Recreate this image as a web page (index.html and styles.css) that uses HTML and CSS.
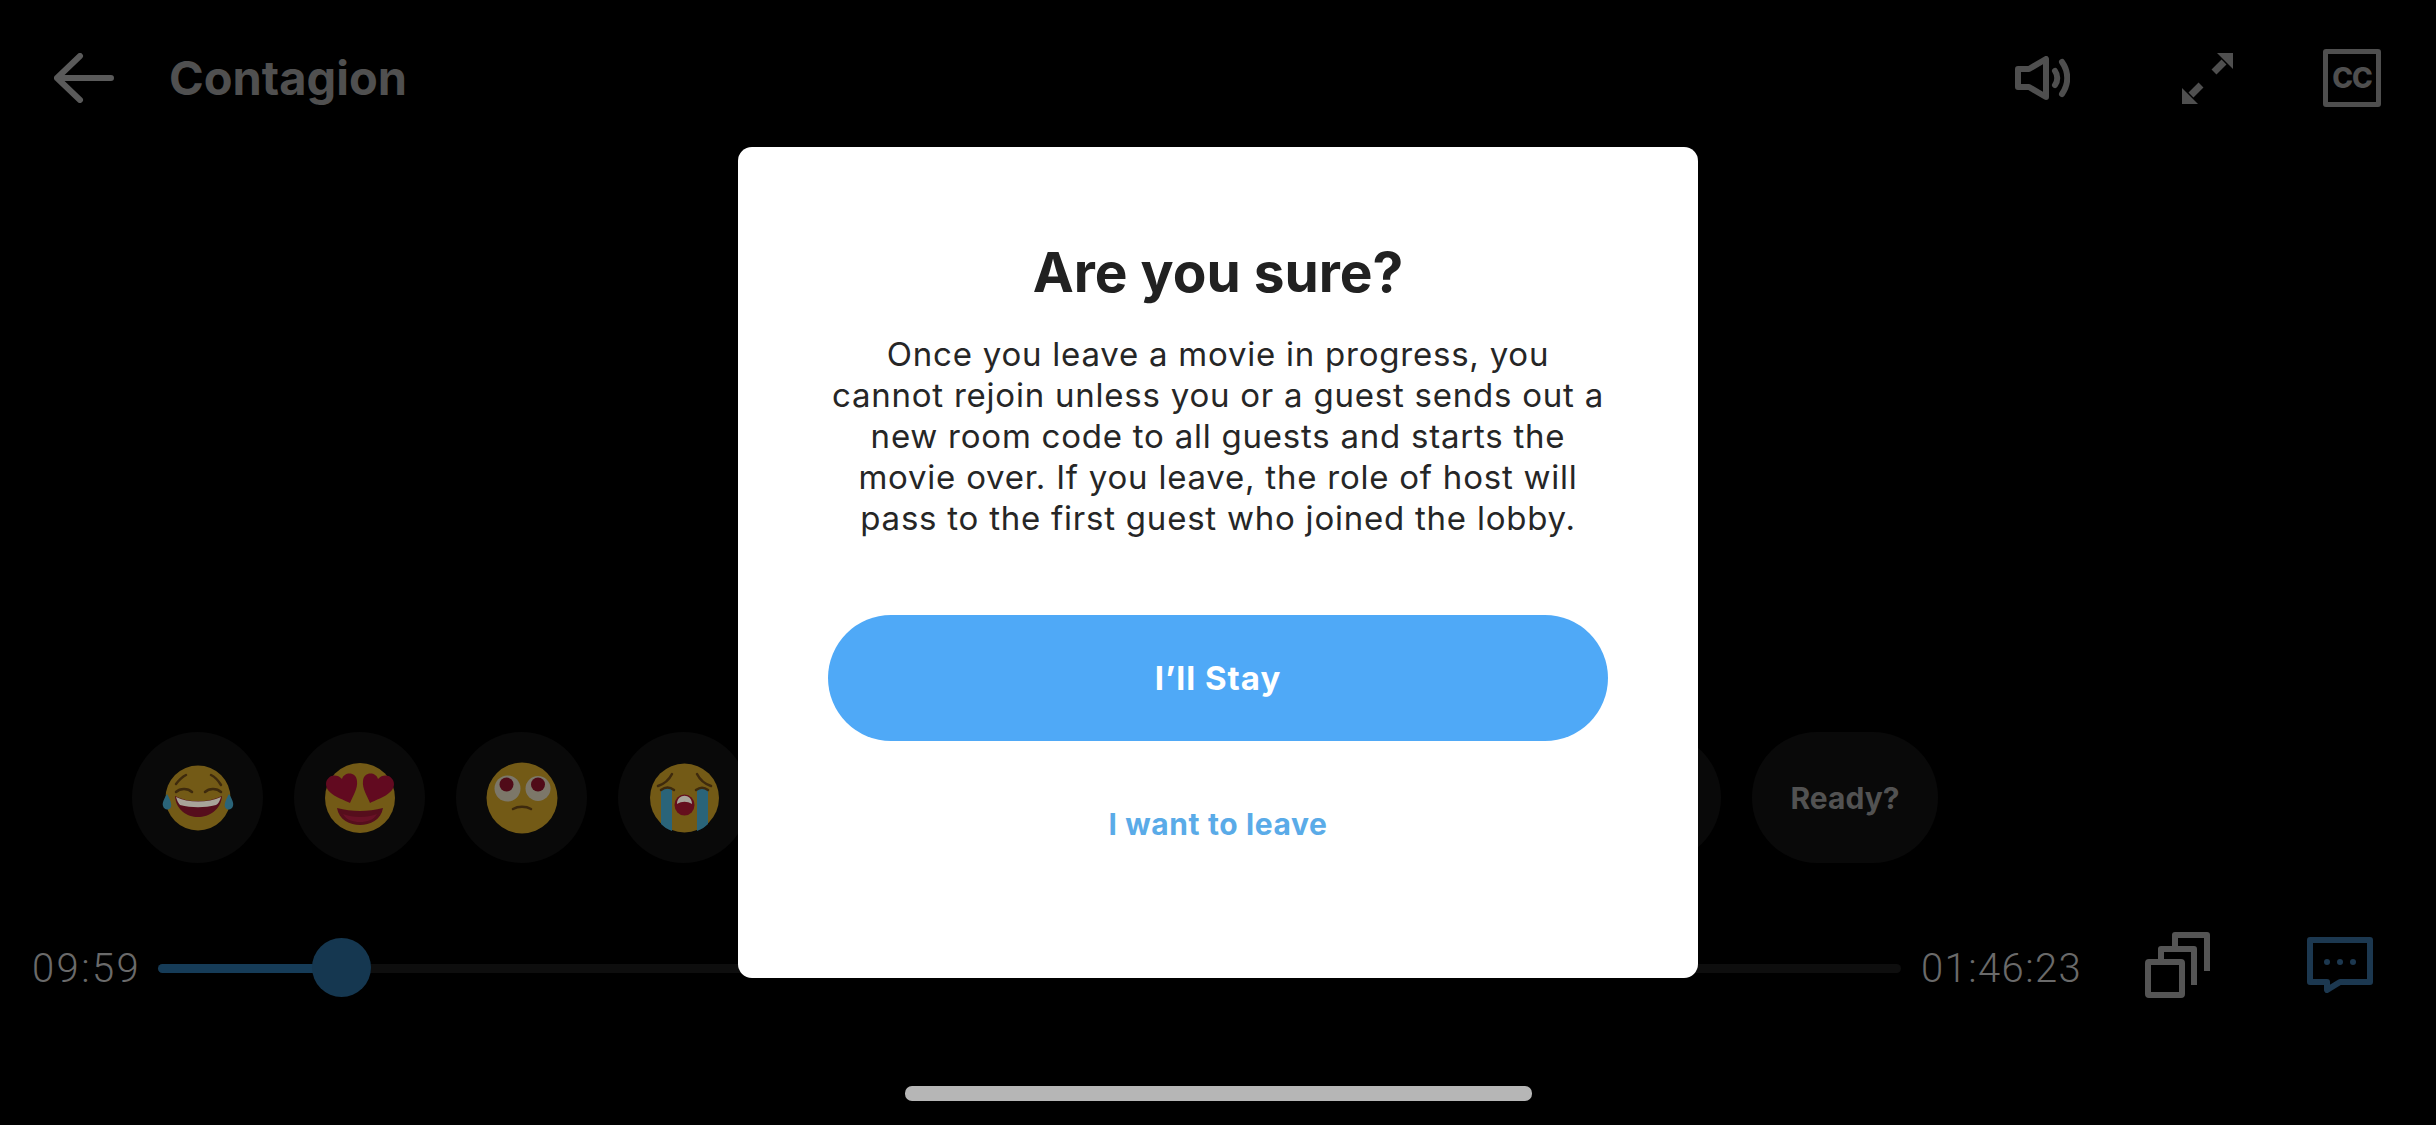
FILE: index.html
```html
<!DOCTYPE html>
<html lang="en">
<head>
  <meta charset="UTF-8">
  <title>Contagion</title>
  <link rel="stylesheet" href="styles.css">
</head>
<body>

<div class="player">
  <!-- Top bar -->
  <div class="topbar">
    <svg class="back" viewBox="0 0 60 50" fill="none" stroke="#5a5a5a" stroke-width="6" stroke-linecap="round" stroke-linejoin="round">
      <path d="M3 25H57M26 3L3 25L26 47"/>
    </svg>
    <div class="movie-title">Contagion</div>
    <div class="top-icons">
      <svg class="ic-sound" viewBox="0 0 55 44" fill="none" stroke="#4f4f4f" stroke-width="6" stroke-linejoin="round" stroke-linecap="round">
        <path d="M3 13H14L31 3V41L14 31H3Z"/>
        <path d="M40 15C43 19 43 25 40 29"/>
        <path d="M47 6C54 16 54 28 47 38"/>
      </svg>
      <svg class="ic-expand" viewBox="0 0 51 51" fill="#4f4f4f" stroke="none">
        <path d="M35 0H51V16Z"/>
        <path d="M16 51H0V35Z"/>
        <path d="M42 9L32 19M9 42L19 32" stroke="#4f4f4f" stroke-width="7"/>
      </svg>
      <div class="ic-cc">CC</div>
    </div>
  </div>

  <!-- Reactions -->
  <div class="reactions">
    <div class="reaction">
      <svg class="emoji" viewBox="0 0 76 76">
        <circle cx="38" cy="38" r="32.5" fill="#735a16"/>
        <path d="M7 34C4 39 2 43 3 46C4 50 9 51 11 47C12 44 10 39 7 34ZM69 34C72 39 74 43 73 46C72 50 67 51 65 47C64 44 66 39 69 34Z" fill="#2a6479"/>
        <path d="M15 36C28 43 48 43 62 36C61 50 49 57 38 57C27 57 16 50 15 36Z" fill="#560e1c"/>
        <path d="M16 37C28 43 48 43 61 37C60 41 58 44 56 45C44 48 32 48 20 45C18 43 17 40 16 37Z" fill="#a8a49a"/>
        <path d="M16 32C20 28 28 28 32 32M45 32C49 28 57 28 61 32M16 24C19 20 22 17 26 15M51 15C55 17 58 20 61 25" fill="none" stroke="#3e2a0d" stroke-width="2.5" stroke-linecap="round"/>
      </svg>
    </div>
    <div class="reaction">
      <svg class="emoji" viewBox="0 0 76 76">
        <circle cx="38" cy="38" r="35" fill="#735a16"/>
        <path d="M28 43C18 38 4 34 4 24C4 16 14 12 20 19C22 12 34 11 35 21C36 28 31 36 28 43Z" fill="#620a20"/>
        <path d="M48 43C58 38 72 34 72 24C72 16 62 12 56 19C54 12 42 11 41 21C40 28 45 36 48 43Z" fill="#620a20"/>
        <path d="M15 48C30 52 46 52 61 48C59 60 48 65 38 65C28 65 17 60 15 48Z" fill="#560e1c"/>
        <path d="M21 54C31 58 45 58 55 54C52 60 45 62 38 62C31 62 24 60 21 54Z" fill="#691226"/>
      </svg>
    </div>
    <div class="reaction">
      <svg class="emoji" viewBox="0 0 76 76">
        <circle cx="38" cy="38" r="35.5" fill="#735a16"/>
        <circle cx="23.5" cy="28.5" r="13" fill="#7c7769"/>
        <circle cx="54" cy="28.5" r="12.5" fill="#7c7769"/>
        <circle cx="22.5" cy="24.5" r="7" fill="#500b18"/>
        <circle cx="54" cy="24.5" r="7" fill="#500b18"/>
        <path d="M29 49C34 46 42 46 47 49" fill="none" stroke="#3e2a0d" stroke-width="2.5" stroke-linecap="round"/>
      </svg>
    </div>
    <div class="reaction">
      <svg class="emoji" viewBox="0 0 76 76">
        <circle cx="38.5" cy="38" r="34.5" fill="#735a16"/>
        <path d="M15 29H26V71C21 69 18 67 15 64ZM51 29H62V64C59 67 56 69 51 71Z" fill="#2a6479"/>
        <path d="M12 26C18 24 23 20 26 14M65 26C59 24 54 20 51 14M15 30C19 27 24 27 28 30M50 30C54 27 58 27 62 30" fill="none" stroke="#3e2a0d" stroke-width="2.5" stroke-linecap="round"/>
        <ellipse cx="38.5" cy="45" rx="10" ry="10.5" fill="#650e1d"/>
        <path d="M31 44C31 33 46 33 46 44C41 41 36 41 31 44Z" fill="#a8a49a"/>
      </svg>
    </div>
    <div class="reaction"></div>
    <div class="reaction"></div>
    <div class="reaction"></div>
    <div class="reaction"></div>
    <div class="reaction"></div>
    <div class="reaction"></div>
    <div class="reaction ready">Ready?</div>
  </div>

  <!-- Timeline -->
  <div class="timeline">
    <div class="time time-start">09:59</div>
    <div class="track">
      <div class="fill"></div>
      <div class="thumb"></div>
    </div>
    <div class="time time-end">01:46:23</div>
    <svg class="ic-cards" viewBox="0 0 65 66" fill="none" stroke="#555" stroke-width="6" stroke-linejoin="round">
      <rect x="3" y="30" width="34" height="33" rx="1"/>
      <path d="M16 27V17H49V53"/>
      <path d="M30 14V3H62V39"/>
    </svg>
    <svg class="ic-chat" viewBox="0 0 66 56">
      <path d="M3 3H63V45H33L20 53V45H3Z" fill="none" stroke="#1c3850" stroke-width="6" stroke-linejoin="round"/>
      <circle cx="20" cy="25" r="3" fill="#1c3850"/>
      <circle cx="33" cy="25" r="3" fill="#1c3850"/>
      <circle cx="46" cy="25" r="3" fill="#1c3850"/>
    </svg>
  </div>

  <div class="home-bar"></div>
</div>

<!-- Leave dialog -->
<div class="modal">
  <h2>Are you sure?</h2>
  <p>Once you leave a movie in progress, you<br>cannot rejoin unless you or a guest sends out a<br>new room code to all guests and starts the<br>movie over. If you leave, the role of host will<br>pass to the first guest who joined the lobby.</p>
  <button class="stay">I’ll Stay</button>
  <a class="leave">I want to leave</a>
</div>

</body>
</html>
```

FILE: styles.css
```css
* { margin: 0; padding: 0; box-sizing: border-box; }
html, body {
  width: 100%;
  height: 100%;
  background: #000;
  font-family: Inter, "Liberation Sans", sans-serif;
  overflow: hidden;
}
.player {
  width: 2436px;
  height: 1125px;
  display: flex;
  flex-direction: column;
}
.topbar {
  display: flex;
  align-items: center;
  height: 156px;
  padding-left: 54px;
  padding-right: 55px;
}
.back {
  width: 60px;
  height: 50px;
  margin-right: 55px;
}
.movie-title {
  margin-bottom: 2px;
  font-size: 47px;
  font-weight: 700;
  color: #505050;
}
.top-icons {
  margin-left: auto;
  display: flex;
  align-items: center;
}
.ic-sound {
  width: 55px;
  height: 44px;
  margin-right: 112px;
}
.ic-expand {
  width: 51px;
  height: 51px;
  margin-right: 90px;
}
.ic-cc {
  width: 58px;
  height: 58px;
  border: 5px solid #4f4f4f;
  border-radius: 3px;
  display: flex;
  align-items: center;
  justify-content: center;
  font-size: 28px;
  font-weight: 800;
  letter-spacing: -1px;
  color: #4f4f4f;
}
.reactions {
  display: flex;
  gap: 31px;
  margin-top: 576px;
  padding-left: 132px;
}
.reaction {
  width: 131px;
  height: 131px;
  border-radius: 50%;
  background: #090909;
  display: flex;
  align-items: center;
  justify-content: center;
}
.reaction.ready {
  width: 186px;
  border-radius: 65px;
  font-size: 30px;
  font-weight: 700;
  color: #525252;
}
.emoji {
  width: 76px;
  height: 76px;
}
.timeline {
  display: flex;
  align-items: center;
  height: 66px;
  margin-top: 72px;
  padding-left: 32px;
}
.time {
  font-family: Roboto, "Liberation Sans", sans-serif;
  font-size: 40px;
  font-weight: 300;
  color: #6a6a6a;
}
.time-start { width: 126px; letter-spacing: 2.4px; }
.time-end { width: 224px; letter-spacing: 1.4px; }
.track {
  position: relative;
  width: 1743px;
  height: 9px;
  margin-right: 20px;
  border-radius: 5px;
  background: #0e0e0e;
}
.fill {
  width: 170px;
  height: 100%;
  border-radius: 5px;
  background: #163c58;
}
.thumb {
  position: absolute;
  left: 154px;
  top: -26px;
  width: 59px;
  height: 59px;
  border-radius: 50%;
  background: #153750;
}
.ic-cards {
  width: 65px;
  height: 66px;
  margin-right: 97px;
  margin-bottom: 6px;
}
.ic-chat {
  width: 66px;
  height: 56px;
  margin-bottom: 6px;
}
.home-bar {
  width: 627px;
  height: 15px;
  margin: 85px auto 0;
  border-radius: 7px;
  background: #b6b6b6;
}
.modal {
  position: absolute;
  left: 738px;
  top: 147px;
  width: 960px;
  height: 831px;
  background: #fff;
  border-radius: 14px;
  display: flex;
  flex-direction: column;
  align-items: center;
  padding-top: 92px;
}
.modal h2 {
  font-size: 55px;
  line-height: 66px;
  font-weight: 700;
  color: #212121;
}
.modal p {
  margin-top: 29px;
  font-size: 33px;
  line-height: 41px;
  letter-spacing: 0.77px;
  text-align: center;
  color: #262626;
}
.stay {
  width: 780px;
  height: 126px;
  margin-top: 76px;
  border: none;
  border-radius: 63px;
  background: #4fa9f7;
  color: #fff;
  font-family: inherit;
  font-size: 33px;
  font-weight: 700;
  letter-spacing: 1px;
}
.leave {
  margin-top: 65px;
  font-size: 30px;
  font-weight: 700;
  letter-spacing: 0.6px;
  color: #5aabe8;
}
```
